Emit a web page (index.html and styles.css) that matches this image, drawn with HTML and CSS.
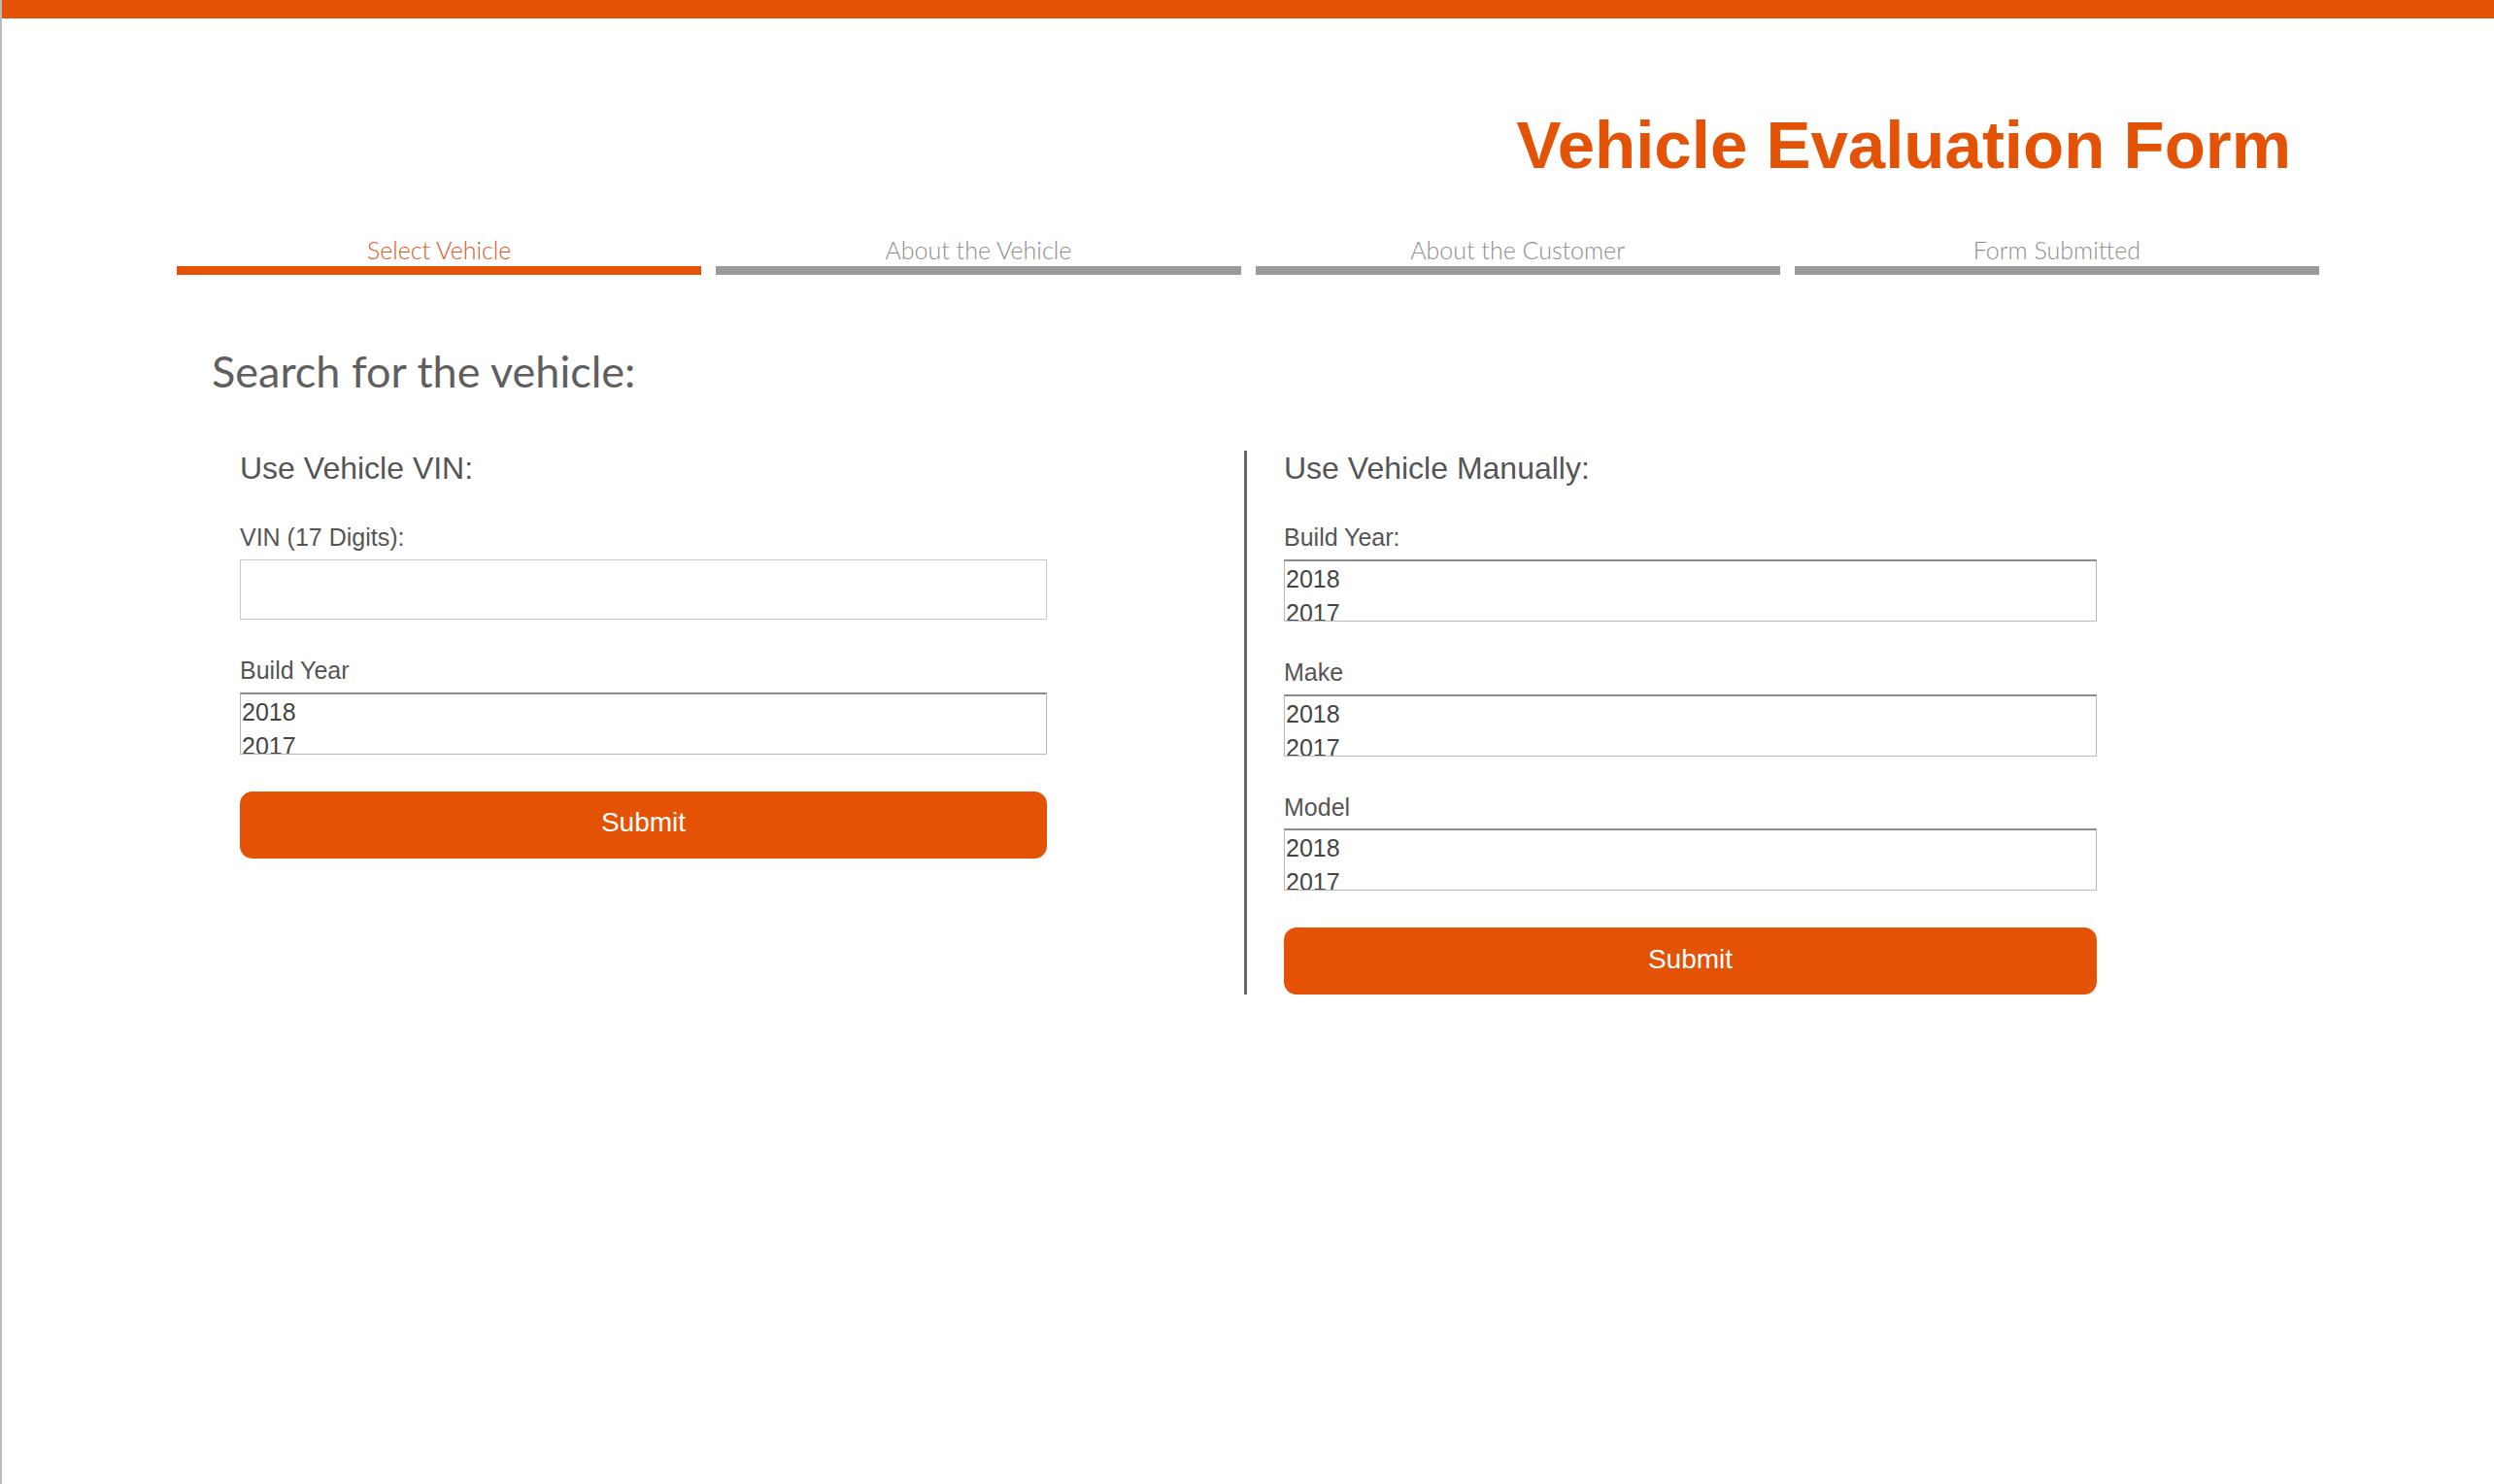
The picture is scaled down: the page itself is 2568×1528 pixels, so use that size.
FILE: index.html
```html
<!DOCTYPE html>
<html lang="en">
<head>
<meta charset="utf-8">
<title>Vehicle Evaluation Form</title>
<link rel="stylesheet" href="styles.css">
</head>
<body>
<div class="page">
  <div class="topbar"></div>
  <div class="wrap">
    <header class="header">
      <h1 class="title">Vehicle Evaluation Form</h1>
    </header>
    <nav class="steps">
      <div class="step active"><span class="step-label">Select Vehicle</span><span class="step-bar"></span></div>
      <div class="step"><span class="step-label">About the Vehicle</span><span class="step-bar"></span></div>
      <div class="step"><span class="step-label">About the Customer</span><span class="step-bar"></span></div>
      <div class="step"><span class="step-label">Form Submitted</span><span class="step-bar"></span></div>
    </nav>
    <section class="search">
      <h2 class="search-title">Search for the vehicle:</h2>
      <div class="columns">
        <div class="col col-vin">
          <h3 class="col-title">Use Vehicle VIN:</h3>
          <div class="field">
            <label class="label" for="vin">VIN (17 Digits):</label>
            <input class="text-input" id="vin" type="text">
          </div>
          <div class="field">
            <span class="label">Build Year</span>
            <div class="listbox"><div class="opt">2018</div><div class="opt">2017</div><div class="opt">2016</div></div>
          </div>
          <button class="submit" type="button">Submit</button>
        </div>
        <div class="col col-manual">
          <h3 class="col-title">Use Vehicle Manually:</h3>
          <div class="field">
            <span class="label">Build Year:</span>
            <div class="listbox"><div class="opt">2018</div><div class="opt">2017</div><div class="opt">2016</div></div>
          </div>
          <div class="field">
            <span class="label">Make</span>
            <div class="listbox"><div class="opt">2018</div><div class="opt">2017</div><div class="opt">2016</div></div>
          </div>
          <div class="field">
            <span class="label">Model</span>
            <div class="listbox"><div class="opt">2018</div><div class="opt">2017</div><div class="opt">2016</div></div>
          </div>
          <button class="submit" type="button">Submit</button>
        </div>
      </div>
    </section>
  </div>
</div>
</body>
</html>
```
FILE: styles.css
```css
html, body {
  margin: 0;
  padding: 0;
  background: #ffffff;
}

body {
  font-family: "Liberation Sans", Arial, sans-serif;
}

.page {
  min-height: 100vh;
  box-sizing: border-box;
  border-left: 2px solid #bcbcbc;
}

.topbar {
  height: 19px;
  background: #e35205;
}

.wrap {
  padding: 0 180px 0 180px;
}

.header {
  display: flex;
  justify-content: flex-end;
  padding-right: 29px;
  margin-top: 91px;
}

.title {
  margin: 0;
  font-family: "Liberation Sans", Arial, sans-serif;
  font-weight: 700;
  font-size: 69px;
  line-height: 1.15;
  color: #e35205;
}

.steps {
  display: flex;
  gap: 15px;
  margin-top: 53px;
}

.step {
  flex: 1;
  display: flex;
  flex-direction: column;
  align-items: center;
}

.step-label {
  font-family: Lato, "Open Sans", sans-serif;
  font-weight: 300;
  font-size: 25px;
  line-height: 30px;
  color: #8e8e8e;
}

.step-bar {
  align-self: stretch;
  height: 9px;
  margin-top: 2px;
  background: #9a9a9a;
}

.step.active .step-label {
  color: #dc5a1c;
}

.step.active .step-bar {
  background: #e35205;
}

.search {
  margin-top: 72px;
  padding-left: 36px;
}

.search-title {
  margin: 0;
  font-family: Lato, "Open Sans", sans-serif;
  font-weight: 400;
  font-size: 45px;
  line-height: 1.2;
  color: #5f5f5f;
}

.columns {
  display: flex;
  align-items: flex-start;
  margin-top: 55px;
  padding-left: 29px;
}

.col-vin {
  width: 831px;
}

.col-manual {
  width: 837px;
  margin-left: 203px;
  padding-left: 38px;
  border-left: 3px solid #666666;
}

.col-title {
  margin: 0;
  font-weight: 400;
  font-size: 32px;
  line-height: 1.15;
  color: #555555;
}

.field {
  margin-top: 38px;
}

.label {
  display: block;
  font-size: 25px;
  line-height: 1.15;
  color: #555555;
  margin-bottom: 8px;
}

.text-input {
  display: block;
  box-sizing: border-box;
  width: 100%;
  height: 62px;
  margin: 2px 0 0 0;
  padding: 0 8px;
  border: 1px solid #c9c9c9;
  border-radius: 0;
  background: #ffffff;
  font-family: "Liberation Sans", Arial, sans-serif;
  font-size: 25px;
  outline: none;
}

.listbox {
  box-sizing: border-box;
  height: 64px;
  overflow: hidden;
  border: 1px solid #b8b8b8;
  border-top: 2px solid #8c8c8c;
  padding: 1px 1px 0 1px;
  background: #ffffff;
}

.opt {
  font-size: 25px;
  line-height: 35px;
  color: #444444;
}

.submit {
  display: flex;
  align-items: center;
  justify-content: center;
  box-sizing: border-box;
  width: 100%;
  height: 69px;
  margin-top: 38px;
  padding: 0 0 4px 0;
  border: none;
  border-radius: 13px;
  background: #e35205;
  color: #ffffff;
  font-family: "Liberation Sans", Arial, sans-serif;
  font-size: 28px;
  cursor: pointer;
}
```
